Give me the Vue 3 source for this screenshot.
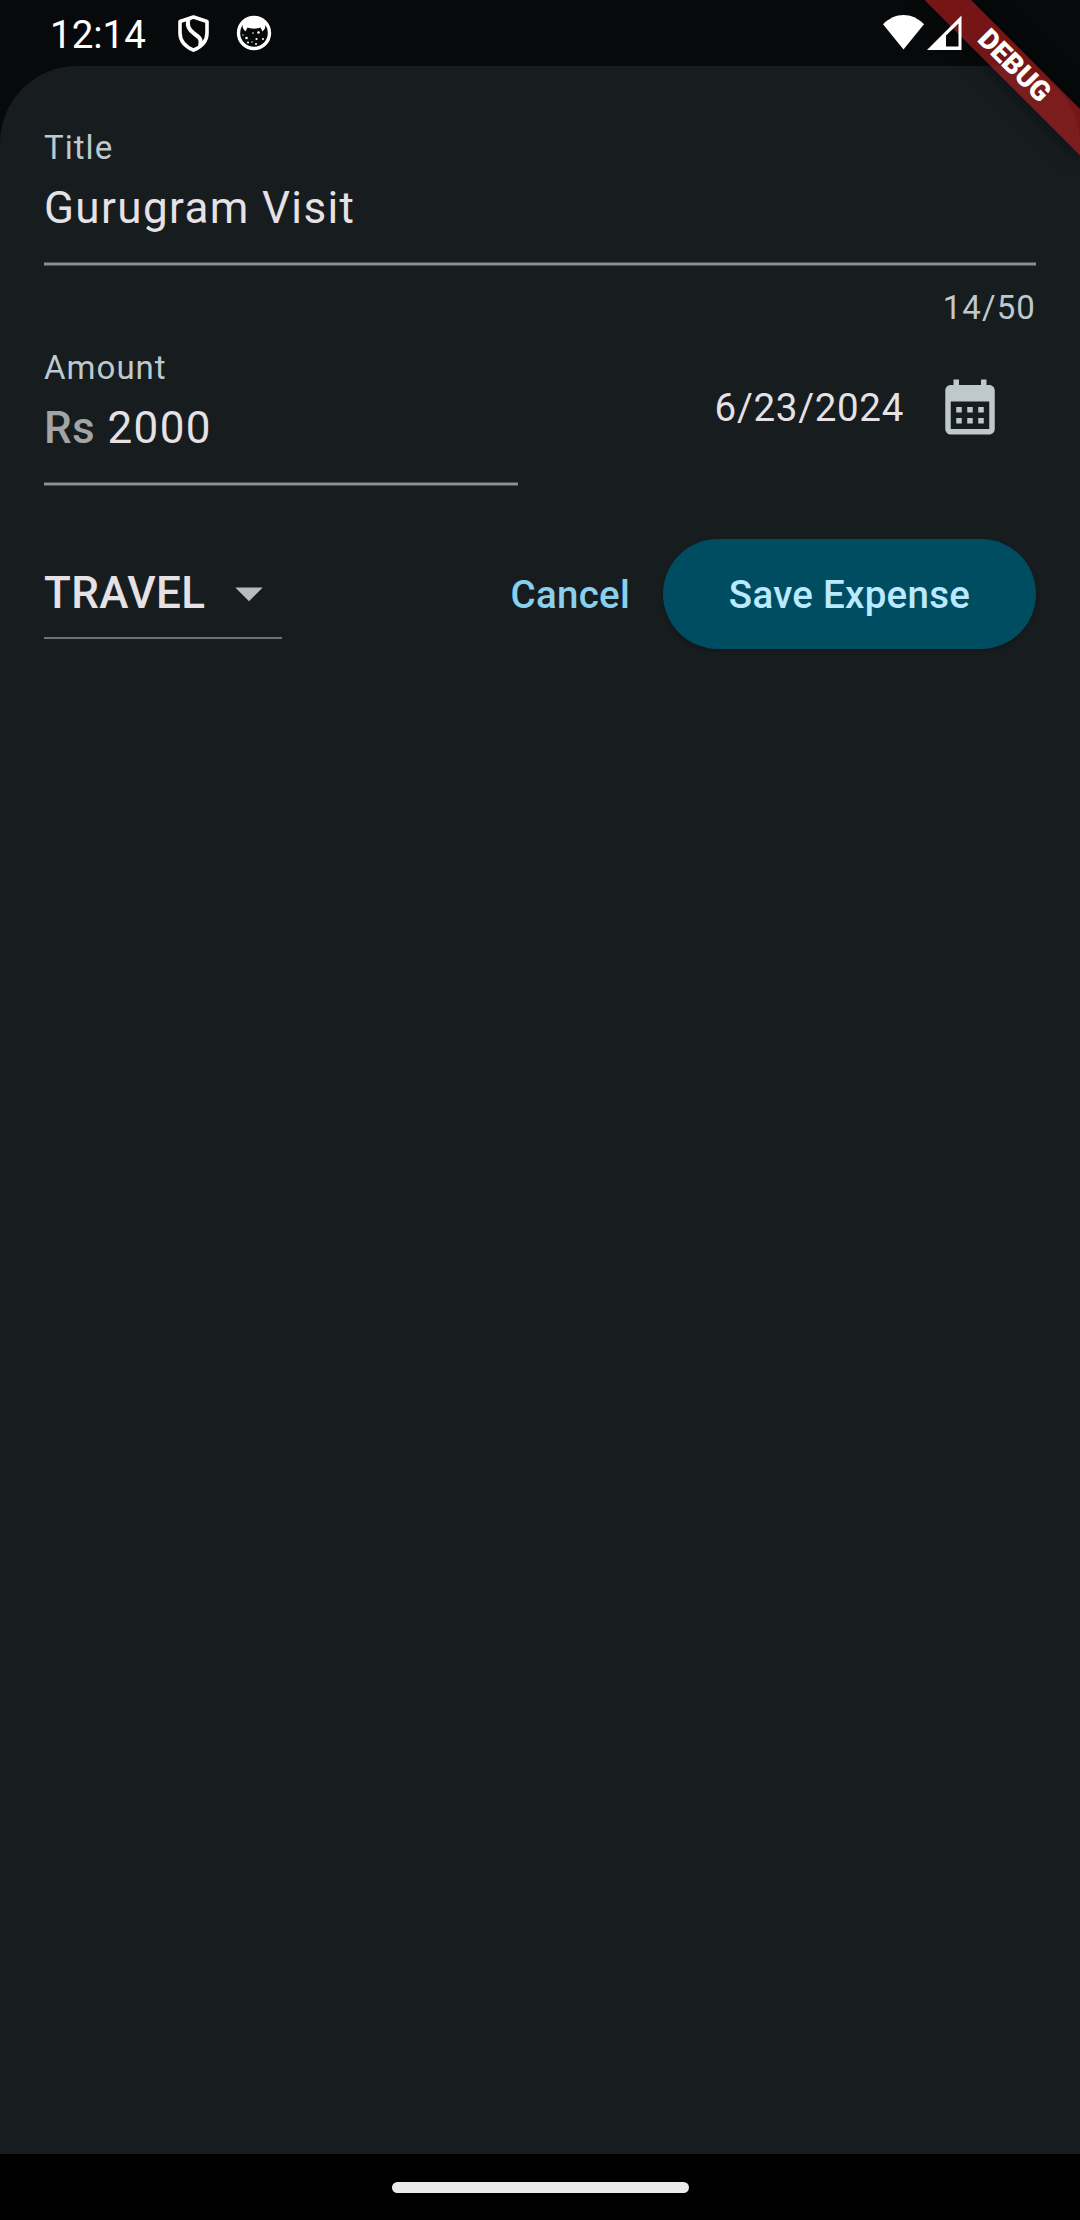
<script setup>
import { ref } from 'vue'

const title = ref('Gurugram Visit')
const amount = ref('2000')
const date = ref('6/23/2024')
const category = ref('TRAVEL')
</script>

<template>
  <div class="screen">
    <header class="status">
      <span class="clock">12:14</span>
      <svg class="shield" width="32" height="38" viewBox="0 0 32 38" fill="none" stroke="#fff" stroke-width="3.6" stroke-linejoin="round">
        <path d="M15.5 2 L29 6.500 V18 C29 26 23 32 15.5 35.200 C8 32 2 26 2 18 V6.500 Z" />
        <path d="M10.500 4 C8.500 11 11 14.500 16 18.500 C22 22.500 24 25 22 31" stroke-width="4" />
      </svg>
      <svg class="cat" width="36" height="36" viewBox="0 0 36 36">
        <circle cx="18" cy="18" r="15.500" fill="none" stroke="#fff" stroke-width="3.400" />
        <path d="M6 6 L18 2 L30 6 L29 13.500 L26.500 16.500 L24.500 12.500 C21 14 15 14 11.500 12.500 L9.500 16.500 L7 13.500 Z" fill="#fff" />
        <g fill="#fff">
          <circle cx="10.500" cy="23" r="1.300" /><circle cx="22.500" cy="17.500" r="1.300" />
          <circle cx="20.500" cy="24" r="1.100" /><circle cx="27" cy="24" r="1" />
          <circle cx="12" cy="27.500" r="1" /><circle cx="20" cy="29" r="1" />
          <circle cx="17" cy="18" r=".8" /><circle cx="7" cy="20" r=".7" /><circle cx="16" cy="27" r=".7" />
        </g>
      </svg>
      <span class="grow"></span>
      <svg class="wifi" width="41" height="35" viewBox="0 0 41 35"><path d="M0 9.300 C12 -3.100 29 -3.100 41 9.300 L20.500 34.500 Z" fill="#fff" /></svg>
      <svg class="signal" width="35" height="35" viewBox="0 0 35 35"><path fill-rule="evenodd" d="M0 35 L34.500 .5 V35 Z M19 20.500 V31.500 H31.500 V8.500 Z" fill="#fff" /></svg>
    </header>

    <main class="sheet">
      <section class="field">
        <label class="label">Title</label>
        <div class="value">{{ title }}</div>
        <div class="rule"></div>
      </section>
      <div class="counter">{{ title.length }}/50</div>

      <div class="row">
        <section class="field amount">
          <label class="label">Amount</label>
          <div class="value"><span class="prefix">Rs </span>{{ amount }}</div>
          <div class="rule"></div>
        </section>
        <div class="date">
          <span class="date-text">{{ date }}</span>
          <button class="icon-button" aria-label="Pick date">
            <svg width="66" height="66" viewBox="0 0 24 24" fill="#bfc8cc">
              <path d="M19 4h-1V2h-2v2H8V2H6v2H5c-1.110 0-1.990.9-1.990 2L3 20a2 2 0 0 0 2 2h14c1.100 0 2-.9 2-2V6c0-1.100-.9-2-2-2zm0 16H5V10h14v10zM9 14H7v-2h2v2zm4 0h-2v-2h2v2zm4 0h-2v-2h2v2zm-8 4H7v-2h2v2zm4 0h-2v-2h2v2zm4 0h-2v-2h2v2z" />
            </svg>
          </button>
        </div>
      </div>

      <div class="actions">
        <div class="dropdown">
          <span>{{ category }}</span>
          <svg width="66" height="66" viewBox="0 0 24 24" fill="#b9bbbc"><path d="M7 10l5 5 5-5z" /></svg>
        </div>
        <span class="grow"></span>
        <button class="cancel">Cancel</button>
        <button class="save">Save Expense</button>
      </div>
    </main>

    <footer class="nav"><div class="handle"></div></footer>
    <div class="banner-clip"><div class="banner">DEBUG</div></div>
  </div>
</template>

<style>
body { background: #07090a; }
</style>

<style scoped>
.screen {
  position: relative;
  display: flex;
  flex-direction: column;
  width: 1080px;
  height: 2220px;
  overflow: hidden;
  background: #07090a;
  color: #e6e1e5;
  font-family: Roboto, sans-serif;
}
.grow { flex: 1; }
.status {
  position: relative;
  z-index: 3;
  display: flex;
  align-items: flex-start;
  height: 66px;
  box-sizing: border-box;
  padding: 0 118px 0 50px;
}
.clock { width: 96px; font-size: 38.500px; line-height: 44px; margin-top: 13px; color: #fff; }
.shield { margin: 15px 0 0 32px; }
.cat { margin: 15px 0 0 26px; }
.wifi { margin-top: 15px; }
.signal { margin: 15px 0 0 3px; }

.sheet {
  flex: 1;
  box-sizing: border-box;
  padding: 60px 44px 0;
  border-radius: 77px 77px 0 0;
  background: #171c1f;
}
.field { display: flex; flex-direction: column; }
.label { font-size: 33px; line-height: 44px; letter-spacing: 1.030px; color: #bfc8cc; }
.value {
  margin-top: 5px;
  font-size: 44px;
  line-height: 66px;
  letter-spacing: 1.375px;
  white-space: pre;
}
.prefix { margin-right: 1px; font-weight: 500; letter-spacing: .41px; color: #a3a4a5; }
.rule {
  height: 2px;
  margin-top: 21px;
  border: solid #4c5356;
  border-width: 1px 0;
  background: #899296;
}
.counter {
  margin-top: 20px;
  text-align: right;
  font-size: 33px;
  line-height: 44px;
  letter-spacing: 1.100px;
  color: #bfc8cc;
}
.row { display: flex; justify-content: space-between; margin-top: 16px; }
.amount { width: 474px; }
.date {
  display: flex;
  align-items: center;
  height: 132px;
  margin-top: -5.500px;
  font-size: 38.500px;
  letter-spacing: .6875px;
}
.date-text { padding-top: 2px; }
button { margin: 0; padding: 0; border: 0; background: none; font: inherit; }
.icon-button { display: flex; align-items: center; justify-content: center; width: 132px; height: 132px; }
.actions { display: flex; align-items: center; margin-top: 53px; height: 110px; }
.dropdown {
  display: flex;
  align-items: center;
  justify-content: space-between;
  width: 238px;
  height: 90px;
  box-sizing: border-box;
  border-bottom: 2px solid #6e7273;
  font-size: 44px;
  font-weight: 500;
  letter-spacing: .4125px;
}
.cancel, .save { font-size: 38.500px; font-weight: 500; letter-spacing: .275px; line-height: 55px; }
.cancel { padding: 0 33px; color: #88d0ec; }
.save {
  width: 373px;
  height: 110px;
  border-radius: 55px;
  background: #004d61;
  color: #b9eaff;
  box-shadow: 0 2px 4px rgba(0, 0, 0, .2);
}
.nav { display: flex; justify-content: center; height: 66px; background: #000; }
.handle { width: 297px; height: 11px; margin-top: 27.500px; border-radius: 6px; background: #ebebeb; }

.banner-clip {
  position: absolute;
  z-index: 2;
  top: 0;
  right: 0;
  width: 240px;
  height: 240px;
  overflow: hidden;
}
.banner {
  position: absolute;
  top: 77px;
  left: 130px;
  width: 220px;
  height: 33px;
  transform: rotate(45deg);
  transform-origin: 110px -77px;
  background: rgba(183, 28, 28, .627);
  box-shadow: 0 0 21.800px rgba(0, 0, 0, .5);
  color: #fff;
  font-size: 28.050px;
  font-weight: 900;
  line-height: 32px;
  text-align: center;
}
</style>
